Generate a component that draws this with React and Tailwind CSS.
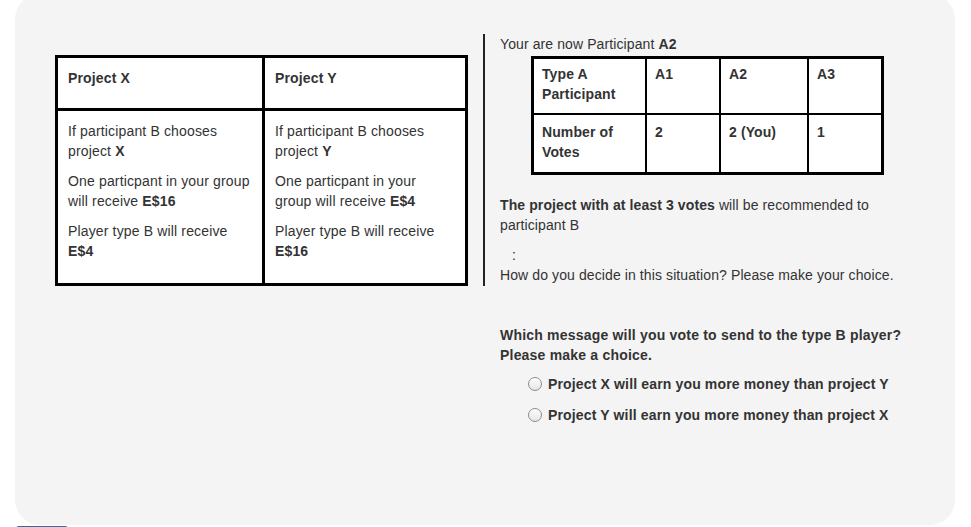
import React from 'react';

const font = "font-['Liberation_Sans',Arial,Helvetica,sans-serif]";

function Radio({ children }) {
  return (
    <label className="flex items-center h-[20px] ml-[28px]">
      <span className="w-[14px] h-[14px] rounded-full border border-[#8c8c8c] bg-gradient-to-b from-white to-[#e4e4e4] shrink-0" />
      <span className="ml-[6px] font-bold tracking-[0.15px]">{children}</span>
    </label>
  );
}

export default function App() {
  return (
    <div className={`${font} text-[14px] leading-[20px] tracking-[0.1px] text-[#333] bg-white min-h-[527px]`}>
      {/* Panel */}
      <div className="ml-[15px] w-[940px] h-[531px] -mt-[6px] pt-[40px] rounded-[25px] bg-[#f4f4f4]">
        <div className="flex items-start">
          {/* Left column: payoff table */}
          <div className="w-[470px] pl-[40px] pt-[21px] border-r-2 border-[#222] shrink-0 tracking-[0.15px]">
            <div className="w-[413px] border-[3px] border-black bg-white grid grid-cols-[204px_3px_200px]">
              <div className="h-[50px] pt-[10px] px-[10px] font-bold">Project X</div>
              <div className="bg-black" />
              <div className="h-[50px] pt-[10px] px-[10px] font-bold">Project Y</div>
              <div className="col-span-3 h-[3px] bg-black" />
              <div className="h-[172px] pt-[10px] px-[10px] flex flex-col gap-[10px]">
                <p>If participant B chooses project <b>X</b></p>
                <p>One particpant in your group will receive <b>E$16</b></p>
                <p>Player type B will receive <b>E$4</b></p>
              </div>
              <div className="bg-black" />
              <div className="h-[172px] pt-[10px] px-[10px] flex flex-col gap-[10px]">
                <p>If participant B chooses project <b>Y</b></p>
                <p>One particpant in your group will receive <b>E$4</b></p>
                <p>Player type B will receive <b>E$16</b></p>
              </div>
            </div>
          </div>

          {/* Right column: votes and choice */}
          <div className="pl-[15px] w-[440px]">
            <p>Your are now Participant <b>A2</b></p>

            <div className="mt-[2px] ml-[31px] w-[353px] border-[3px] border-black bg-white grid grid-cols-[111px_2px_72px_2px_86px_2px_72px] font-bold">
              <div className="h-[54px] pt-[5px] px-[8px]">Type A Participant</div>
              <div className="bg-black" />
              <div className="h-[54px] pt-[5px] px-[8px]">A1</div>
              <div className="bg-black" />
              <div className="h-[54px] pt-[5px] px-[8px]">A2</div>
              <div className="bg-black" />
              <div className="h-[54px] pt-[5px] px-[8px]">A3</div>
              <div className="col-span-7 h-[2px] bg-black" />
              <div className="h-[57px] pt-[7px] px-[8px]">Number of Votes</div>
              <div className="bg-black" />
              <div className="h-[57px] pt-[7px] px-[8px]">2</div>
              <div className="bg-black" />
              <div className="h-[57px] pt-[7px] px-[8px]">2 (You)</div>
              <div className="bg-black" />
              <div className="h-[57px] pt-[7px] px-[8px]">1</div>
            </div>

            <p className="mt-[20px] w-[405px]">
              <b>The project with at least 3 votes</b> will be recommended to participant B
            </p>
            <p className="mt-[10px] pl-[12px]">:</p>
            <p>How do you decide in this situation? Please make your choice.</p>

            <p className="mt-[40px] font-bold tracking-[0.2px]">
              Which message will you vote to send to the type B player?
              <br />
              Please make a choice.
            </p>
            <div className="mt-[9px] flex flex-col gap-[11px]">
              <Radio>Project X will earn you more money than project Y</Radio>
              <Radio>Project Y will earn you more money than project X</Radio>
            </div>
          </div>
        </div>
      </div>

      {/* Button peeking below the panel */}
      <div className="ml-[16px] mt-[1px] w-[52px] h-[34px] rounded-[3px] bg-[#337ab7] border-t border-[#2e6da4]" />
    </div>
  );
}
